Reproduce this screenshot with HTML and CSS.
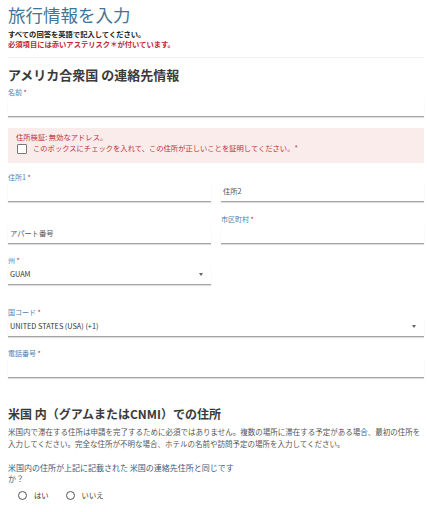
FILE: index.html
```html
<!DOCTYPE html>
<html lang="ja">
<head>
<meta charset="utf-8">
<link rel="stylesheet" href="styles.css">
</head>
<body>
<div class="page">
  <h1 class="title">旅行情報を入力</h1>
  <p class="note">すべての回答を英語で記入してください。</p>
  <p class="note req">必須項目には赤いアステリスク＊が付いています。</p>

  <section class="section first">
    <h2 class="heading">アメリカ合衆国 の連絡先情報</h2>
    <div class="field name-field">
      <div class="label">名前 <span class="star">*</span></div>
      <div class="input"></div>
    </div>

    <div class="error-box">
      <div class="err-line">住所検証: 無効なアドレス。</div>
      <label class="err-check"><span class="box"></span>このボックスにチェックを入れて、この住所が正しいことを証明してください。*</label>
    </div>

    <div class="row">
      <div class="field">
        <div class="label">住所1 <span class="star">*</span></div>
        <div class="input"></div>
      </div>
      <div class="field">
        <div class="label"></div>
        <div class="input placeholder">住所2</div>
      </div>
    </div>

    <div class="row row-2">
      <div class="field">
        <div class="label"></div>
        <div class="input placeholder">アパート番号</div>
      </div>
      <div class="field">
        <div class="label">市区町村 <span class="star">*</span></div>
        <div class="input"></div>
      </div>
    </div>

    <div class="row half">
      <div class="field">
        <div class="label">州 <span class="star">*</span></div>
        <div class="input select">GUAM<span class="arrow"></span></div>
      </div>
    </div>

    <div class="field">
      <div class="label">国コード <span class="star">*</span></div>
      <div class="input select">UNITED STATES (USA) (+1)<span class="arrow"></span></div>
    </div>

    <div class="field">
      <div class="label">電話番号 <span class="star">*</span></div>
      <div class="input"></div>
    </div>
  </section>

  <section class="section second">
    <h2 class="heading">米国 内（グアムまたはCNMI）での住所</h2>
    <p class="para">米国内で滞在する住所は申請を完了するために必須ではありません。複数の場所に滞在する予定がある場合、最初の住所を入力してください。完全な住所が不明な場合、ホテルの名前や訪問予定の場所を入力してください。</p>
    <p class="question">米国内の住所が上記に記載された 米国の連絡先住所と同じですか？</p>
    <div class="radios">
      <label class="radio"><span class="circle"></span>はい</label>
      <label class="radio"><span class="circle"></span>いいえ</label>
    </div>
  </section>
</div>
</body>
</html>
```

FILE: styles.css
```css
* { box-sizing: border-box; }
html, body { margin: 0; padding: 0; background: #fff; }
body {
  font-family: "Noto Sans CJK JP", "Noto Sans", sans-serif;
  color: #333;
}
.page { padding: 4px 3px 0 8px; }

.title {
  margin: 0 0 3px;
  font-size: 17.5px;
  line-height: 22px;
  font-weight: 400;
  color: #3f7596;
}
.note {
  margin: 0;
  font-size: 7.3px;
  line-height: 10px;
  font-weight: 700;
  color: #222;
}
.note.req { color: #c4262e; }

.section.first {
  margin-top: 8px;
  border-top: 1px solid #f0f0f0;
  padding-top: 8px;
}
.heading {
  margin: 0;
  font-size: 12px;
  line-height: 18px;
  font-weight: 700;
  color: #3a3a3a;
}
.first .heading { margin-bottom: 4px; font-size: 13px; }

.field { margin-bottom: 12px; min-width: 0; }
.label {
  height: 9px;
  font-size: 7px;
  line-height: 9px;
  color: #4a82b4;
}
.star { color: #c4262e; }
.input {
  height: 20px;
  border-bottom: 1px solid #a3a3a3;
  box-shadow: 0 1px 1px rgba(0,0,0,0.12);
  font-size: 7.3px;
  line-height: 19px;
  color: #333;
  padding-left: 2px;
  position: relative;
}
.placeholder { color: #555; }
.select { padding-right: 14px; }
.arrow {
  position: absolute;
  right: 8px;
  top: 8px;
  width: 0; height: 0;
  border-left: 2.5px solid transparent;
  border-right: 2.5px solid transparent;
  border-top: 3px solid #666;
}

.name-field { margin-bottom: 11px; }

.error-box {
  background: #fbecec;
  padding: 4px 8px 6px 8px;
  margin-bottom: 10px;
  height: 35px;
}
.err-line {
  font-size: 7.3px;
  line-height: 10px;
  color: #c0303a;
}
.err-check {
  display: flex;
  align-items: center;
  font-size: 7.3px;
  line-height: 13px;
  color: #c0303a;
}
.box {
  width: 10px; height: 10px;
  background: #fff;
  border: 1px solid #777;
  border-radius: 1px;
  margin: 0 6px 0 1px;
  flex: none;
}

.row { display: flex; gap: 10px; }
.row .field { flex: 1 1 0; }
.row-2 { margin-top: 1px; }
.half { width: 50%; padding-right: 5px; }
.half .field { margin-bottom: 23px; }

.section.second {
  margin-top: 27px;
}
.second .heading { margin-bottom: 3px; }
.para {
  margin: 0 0 12px;
  font-size: 7.5px;
  line-height: 12px;
  color: #555;
}
.question {
  margin: 0 0 5px;
  width: 238px;
  font-size: 8px;
  line-height: 11px;
  color: #3a5c7a;
}
.radios { display: flex; gap: 17px; padding-left: 10px; }
.radio {
  display: flex;
  align-items: center;
  font-size: 7.3px;
  line-height: 12px;
  color: #333;
}
.circle {
  width: 9px; height: 9px;
  border: 1.3px solid #555;
  border-radius: 50%;
  margin-right: 7px;
}
```
